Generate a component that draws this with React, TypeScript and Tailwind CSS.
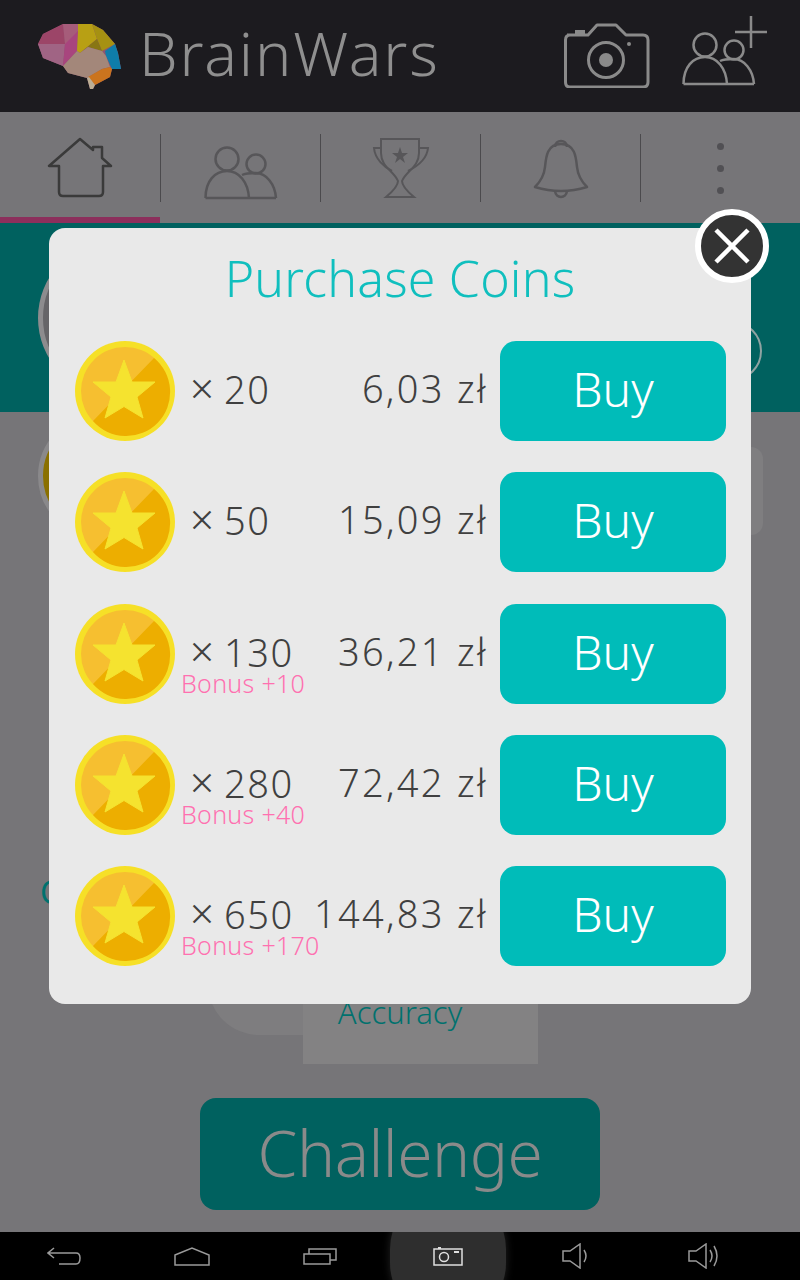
const packs = [
  { count: "20", price: "6,03 zł" },
  { count: "50", price: "15,09 zł" },
  { count: "130", price: "36,21 zł", bonus: "Bonus +10" },
  { count: "280", price: "72,42 zł", bonus: "Bonus +40" },
  { count: "650", price: "144,83 zł", bonus: "Bonus +170" },
];

function Brain() {
  return (
    <svg viewBox="0 0 100 90" className="h-[90px] w-[100px] shrink-0">
      <polygon points="8,33 13,23 33,13 45,13 62,13 73,19 85,33 88,42 91,58 82,58 80,66 65,74 63,78 60,78 57,67 38,62 33,55 13,47" fill="#8f5570" />
      <polygon points="8,33 13,23 33,13 35,33" fill="#9c4568" />
      <polygon points="33,13 48,13 48,20 38,38 35,33" fill="#a65c7a" />
      <polygon points="8,33 35,33 33,55 13,47" fill="#a06484" />
      <polygon points="35,33 48,20 47,40 33,55" fill="#a8457e" />
      <polygon points="48,13 62,13 67,28 50,42 47,40 48,20" fill="#b8a014" />
      <polygon points="62,13 73,19 85,33 72,40 67,28" fill="#a69112" />
      <polygon points="67,28 72,40 58,36 50,42" fill="#887614" />
      <polygon points="85,33 88,42 91,58 82,58 76,45 75,40" fill="#0f7daa" />
      <polygon points="50,42 58,36 72,40 76,45 80,56 72,58 57,67 38,62 33,55 47,40" fill="#a3877a" />
      <polygon points="58,66 72,58 80,56 82,58 80,66 65,74" fill="#cb741e" />
      <polygon points="57,67 59,66 65,74 63,78 60,78" fill="#bcae94" />
    </svg>
  );
}

function Friends({ stroke, plus }: { stroke: string; plus?: boolean }) {
  return (
    <svg viewBox={plus ? "0 0 86 66" : "0 0 74 66"} className={plus ? "h-[66px] w-[86px] overflow-visible" : "h-[66px] w-[74px]"} fill="none" stroke={stroke} strokeWidth="2.5">
      <circle cx="23" cy="25" r="11.5" />
      <circle cx="52" cy="30" r="9.5" />
      <path d="M1.5 64C1.5 47 11 37 23 37C35 37 44 48 45 64" />
      <path d="M38 41C42 39 48 39 52 39C62 39 71 50 72 64M1.5 64H72" />
      {plus && <path d="M53 12H85M69 -4V28" strokeWidth="2.5" />}
    </svg>
  );
}

function Coin() {
  return (
    <svg viewBox="0 0 100 100" className="h-[100px] w-[100px] shrink-0">
      <circle cx="50" cy="50" r="50" fill="#f6e027" />
      <circle cx="50" cy="50" r="44" fill="#f6bf30" />
      <path d="M79 17A44 44 0 1 1 18 80Z" fill="#edae00" />
      <path
        d="M49 19L57 41L80 41L62 56L68 77L49 65.500L30 77L36 56L18 41L41 41Z"
        fill="#f5e32f"
        stroke="#f5e32f"
        strokeWidth="1"
        strokeLinejoin="round"
      />
    </svg>
  );
}

function PackRow({ count, price, bonus }: { count: string; price: string; bonus?: string }) {
  return (
    <div className="flex h-[100px] items-start">
      <Coin />
      <div className="ml-[15px] flex h-full w-[125px] shrink-0 flex-col pt-[29px]">
        <div className="whitespace-nowrap text-[38px] leading-[36px] font-[350] text-[#404040]">
          <span className="mr-[10px] text-[42px] leading-[36px]">×</span>
          <span className="tracking-[1.5px]">{count}</span>
        </div>
        {bonus && <div className="-ml-[9px] mt-[1px] whitespace-nowrap text-[25px] leading-[24px] font-[350] tracking-[0.3px] text-[#ff70b0]">{bonus}</div>}
      </div>
      <div className="flex h-full w-[171px] shrink-0 justify-end pt-[29px]">
        <span className="-mr-[2px] whitespace-nowrap text-[38px] leading-[36px] font-[350] tracking-[2.3px] text-[#404040]">{price}</span>
      </div>
      <button className="ml-[14px] flex h-[100px] w-[226px] shrink-0 items-center justify-center rounded-[16px] bg-[#00bcb9] pb-[4px] text-[48px] font-light text-white">
        Buy
      </button>
    </div>
  );
}

export default function App() {
  return (
    <div className="relative flex h-[1280px] w-[800px] flex-col overflow-hidden bg-[#767578] font-['Noto_Sans',sans-serif]">
      {/* Header */}
      <div className="flex h-[112px] shrink-0 items-center bg-[#1c1b1f] pl-[30px]">
        <Brain />
        <span className="mb-[8px] ml-[9px] text-[61px] leading-none font-[350] tracking-[1.9px] text-[#8f8f8f]">BrainWars</span>
        <svg viewBox="0 0 88 66" className="mb-[2px] ml-auto h-[66px] w-[88px]" fill="none" stroke="#8a8a8a" strokeWidth="3">
          <path d="M5 13H26L35 3H54L64 13H81Q86 13 86 18V60Q86 65 81 65H8Q3.500 65 3.500 60V18Q3.500 13 8 13" strokeLinejoin="round" />
          <circle cx="44" cy="38" r="17.500" />
          <circle cx="44" cy="38" r="7" fill="#8a8a8a" stroke="none" />
          <circle cx="67" cy="22" r="2" fill="#8a8a8a" stroke="none" />
          <path d="M13 10H23" strokeWidth="4" />
        </svg>
        <div className="ml-[32px] mr-[32px] mb-[6px]">
          <Friends stroke="#8a8a8a" plus />
        </div>
      </div>

      {/* Tabs */}
      <div className="flex h-[111px] shrink-0 flex-col bg-[#767578]">
        <div className="grid flex-1 grid-cols-5 pt-[22px]">
          <div className="flex h-[68px] items-center justify-center">
            <svg viewBox="0 0 66 62" className="h-[62px] w-[66px]" fill="none" stroke="#3a3a3a" strokeWidth="2.500" strokeLinejoin="round">
              <path d="M12 29V55Q12 59 16 59H52Q56 59 56 55V29H64L55 21V10H46V13L33 2L2 29H12Z" />
            </svg>
          </div>
          <div className="flex h-[68px] items-start justify-center border-l border-[#4b4a4d]">
            <Friends stroke="#575659" />
          </div>
          <div className="flex h-[68px] items-center justify-center border-l border-[#4b4a4d]">
            <svg viewBox="0 0 58 62" className="h-[62px] w-[58px]" fill="none" stroke="#575659" strokeWidth="2">
              <path d="M9 2H47V16C47 30 34 34 30 44Q30 50 42 60H14Q26 50 26 44C22 34 9 30 9 16Z" />
              <path d="M9 11H2C3 22 12 30 20 34M47 11H56C55 22 44 30 36 34" />
              <path d="M28 10L30 16H36L31 20L33 26L28 22L23 26L25 20L20 16H26Z" fill="#575659" stroke="none" />
            </svg>
          </div>
          <div className="flex h-[68px] items-center justify-center border-l border-[#4b4a4d]">
            <svg viewBox="0 0 56 62" className="h-[62px] w-[56px]" fill="none" stroke="#575659" strokeWidth="2.500" strokeLinejoin="round">
              <path d="M22 10C22 2 34 2 34 10" />
              <path d="M28 7C14 7 13 20 12 30C11 40 6 46 2 50Q28 58 54 50C50 46 45 40 44 30C43 20 42 7 28 7Z" />
              <path d="M22 54C23 62 33 62 34 54" />
            </svg>
          </div>
          <div className="flex h-[68px] flex-col items-center justify-center gap-[15px] border-l border-[#4b4a4d]">
            <div className="h-[7px] w-[7px] rounded-full bg-[#515054]" />
            <div className="h-[7px] w-[7px] rounded-full bg-[#515054]" />
            <div className="h-[7px] w-[7px] rounded-full bg-[#515054]" />
          </div>
        </div>
        <div className="h-[6px] w-[160px] bg-[#8c2f5c]" />
      </div>

      {/* Profile band, mostly behind the dialog */}
      <div className="flex h-[189px] shrink-0 items-center justify-between bg-[#00615f] pl-[38px] pr-[38px]">
        <div className="h-[156px] w-[156px] rounded-full border-[5px] border-[#8d8c8e] bg-[#666568]" />
        <div className="h-[60px] w-[60px] translate-y-[33px] rounded-full border-2 border-[#8fa3a2]" />
      </div>

      {/* Page body */}
      <div className="flex flex-1 flex-col">
        <div className="flex items-start justify-between pl-[38px] pr-[37px] pt-[2px]">
          <div className="h-[124px] w-[124px] rounded-full border-[5px] border-[#8a898b] bg-[#8a7000]" />
          <div className="mt-[33px] h-[88px] w-[300px] rounded-[12px] bg-[#7f7e80]" />
        </div>
        <div className="mt-[332px] pl-[40px] text-[32px] leading-[44px] text-[#00716e]">C</div>
        <div className="ml-[208px] mt-[26px] flex items-start">
          <div className="mt-[44px] h-[51px] w-[95px] rounded-bl-[95px] bg-[#7e7d7f]" />
          <div className="flex h-[124px] w-[235px] flex-col items-center justify-end bg-[#838283] pb-[32px] pr-[41px] text-[31px] leading-[40px] font-[350] text-[#00716e]">
            Accuracy
          </div>
        </div>
        <button className="mx-auto mt-[34px] flex h-[112px] w-[400px] items-center justify-center rounded-[16px] bg-[#00615f] pb-[2px] text-[64px] font-[350] tracking-[-0.5px] text-[#8a8a8a]">
          Challenge
        </button>
      </div>

      {/* Android nav bar */}
      <div className="grid h-[48px] shrink-0 grid-cols-[repeat(6,128px)] grid-rows-[48px] place-items-center overflow-hidden bg-black">
        <svg viewBox="0 0 34 18" className="h-[18px] w-[34px]" fill="none" stroke="#9a9a9a" strokeWidth="1.500">
          <path d="M7 1L1 6L7 11M1 6H29Q33 6 33 11Q33 17 29 17H12" />
        </svg>
        <svg viewBox="0 0 36 19" className="h-[19px] w-[36px]" fill="none" stroke="#9a9a9a" strokeWidth="1.500">
          <path d="M1 8L18 1L35 8V18H1Z" />
        </svg>
        <svg viewBox="0 0 34 17" className="h-[17px] w-[34px]" fill="none" stroke="#9a9a9a" strokeWidth="1.500">
          <path d="M1 6H27V16H1ZM6 6V1H33V12H27" />
        </svg>
        <div className="flex h-[130px] w-[116px] shrink-0 items-center justify-center rounded-full bg-[#2e2e2e] shadow-[0_0_8px_#222222]">
          <svg viewBox="0 0 30 19" className="h-[19px] w-[30px]" fill="none" stroke="#e0e0e0" strokeWidth="1.500">
            <path d="M1 2H29V18H1Z" />
            <circle cx="11" cy="10" r="4.500" />
            <path d="M21 5H26M5 1H8" strokeWidth="2" />
          </svg>
        </div>
        <svg viewBox="0 0 28 26" className="h-[26px] w-[28px]" fill="none" stroke="#9a9a9a" strokeWidth="1.500">
          <path d="M1 8H8L18 1V25L8 18H1Z" />
          <path d="M22 7Q26 13 22 19" />
        </svg>
        <svg viewBox="0 0 32 26" className="h-[26px] w-[32px]" fill="none" stroke="#9a9a9a" strokeWidth="1.500">
          <path d="M1 8H8L18 1V25L8 18H1Z" />
          <path d="M22 7Q26 13 22 19M26 3Q32 13 26 23" />
        </svg>
      </div>

      {/* Purchase dialog */}
      <div className="absolute left-[49px] top-[228px] flex h-[776px] w-[702px] flex-col rounded-[16px] bg-[#e9e9e9] px-[26px]">
        <h1 className="mt-[15px] h-[70px] text-center text-[50px] leading-[70px] font-[350] tracking-[0.2px] text-[#10bfbe]">Purchase Coins</h1>
        <div className="mt-[28px] flex flex-col gap-[31.250px]">
          {packs.map((p) => (
            <PackRow key={p.count} {...p} />
          ))}
        </div>
        <button className="absolute -right-[18px] -top-[19px] flex h-[74px] w-[74px] items-center justify-center rounded-full border-[6px] border-white bg-[#333333]">
          <svg viewBox="0 0 36 36" className="h-[36px] w-[36px]" stroke="#ffffff" strokeWidth="4.500">
            <path d="M2 2L34 34M34 2L2 34" />
          </svg>
        </button>
      </div>
    </div>
  );
}
